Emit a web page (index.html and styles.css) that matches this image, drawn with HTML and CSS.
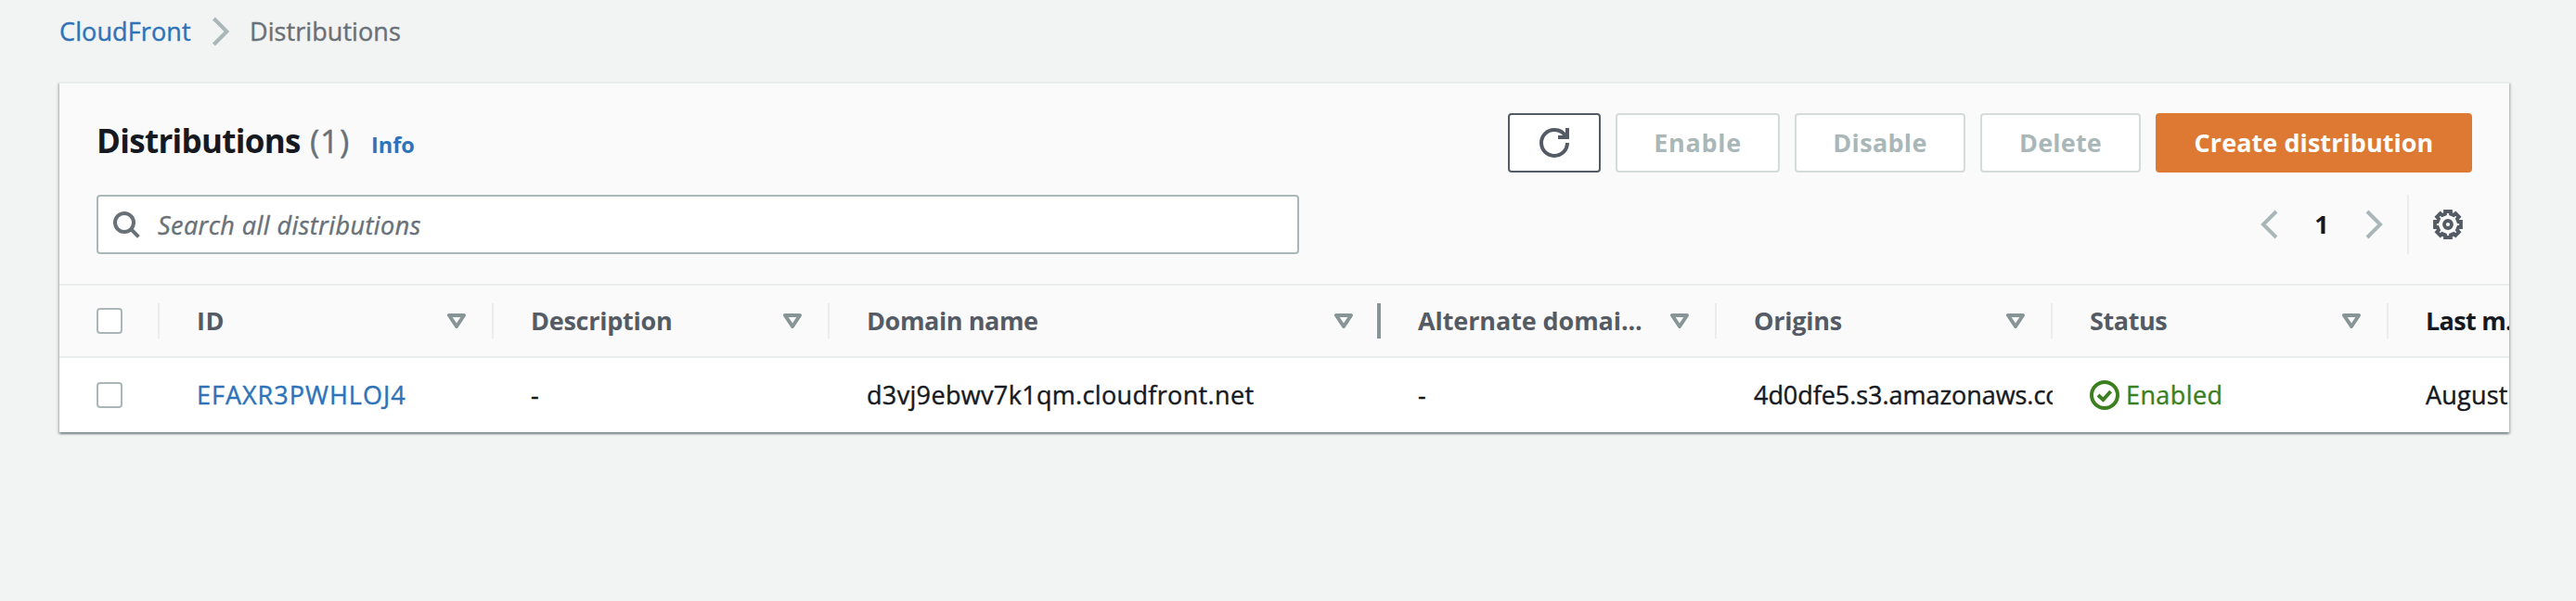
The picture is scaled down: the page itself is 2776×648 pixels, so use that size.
FILE: index.html
```html
<!DOCTYPE html>
<html lang="en">
<head>
<meta charset="utf-8">
<title>CloudFront Distributions</title>
<link rel="stylesheet" href="styles.css">
</head>
<body>
<nav class="breadcrumb">
  <a class="crumb-link" href="#">CloudFront</a>
  <svg class="crumb-sep" width="32" height="32" viewBox="0 0 16 16"><path d="M4.200 1l7 7-7 7"/></svg>
  <span class="crumb-current">Distributions</span>
</nav>
<main class="card">
  <header class="card-head">
    <div class="title-row">
      <h1 class="title">Distributions</h1><span class="count">(1)</span><a class="info" href="#">Info</a>
      <div class="actions">
        <button class="btn btn-refresh" aria-label="Refresh"><svg width="32" height="32" viewBox="0 0 16 16"><path d="M15 8c0 3.900-3.100 7-7 7s-7-3.100-7-7 3.100-7 7-7c2.800 0 5.200 1.500 6.300 4"/><path d="M10 5h5V0"/></svg></button>
        <button class="btn btn-enable" disabled>Enable</button>
        <button class="btn btn-disable" disabled>Disable</button>
        <button class="btn btn-delete" disabled>Delete</button>
        <button class="btn btn-create">Create distribution</button>
      </div>
    </div>
    <div class="tools-row">
      <div class="search">
        <svg width="32" height="32" viewBox="0 0 16 16"><circle cx="7" cy="7" r="5"/><path d="M10.600 10.600l4.100 4.100"/></svg>
        <span class="search-text">Search all distributions</span>
      </div>
      <div class="pager">
        <svg class="chev" width="32" height="32" viewBox="0 0 16 16"><path d="M11.500 1l-7 7 7 7"/></svg>
        <span class="page">1</span>
        <svg class="chev" width="32" height="32" viewBox="0 0 16 16"><path d="M4.500 1l7 7-7 7"/></svg>
      </div>
      <svg class="gear" width="32" height="32" viewBox="0 0 32 32"><path d="M13 2h6v2.700l3.200 1.300 2.100-1.800 3.600 3.600-1.900 2.100 1.300 3.100H30v6h-2.700l-1.300 3.100 1.900 2.100-3.600 3.600-2.100-1.800-3.200 1.300V30h-6v-2.700l-3.200-1.300-2.100 1.800-3.600-3.600 1.900-2.100L4.700 19H2v-6h2.700l1.300-3.100-1.900-2.100 3.600-3.600L9.800 6 13 4.700z"/><circle cx="16" cy="16" r="4"/></svg>
    </div>
  </header>
  <div class="row row-head">
    <div class="cell"><span class="check"></span></div>
    <div class="cell"><span class="label l-id">ID</span><svg class="sort" viewBox="0 0 20 16"><path d="M2 2h16l-8 12z"/></svg></div>
    <div class="cell"><span class="label l-desc">Description</span><svg class="sort" viewBox="0 0 20 16"><path d="M2 2h16l-8 12z"/></svg></div>
    <div class="cell cell-active"><span class="label l-domain">Domain name</span><svg class="sort" viewBox="0 0 20 16"><path d="M2 2h16l-8 12z"/></svg></div>
    <div class="cell"><span class="label l-alt">Alternate domai...</span><svg class="sort" viewBox="0 0 20 16"><path d="M2 2h16l-8 12z"/></svg></div>
    <div class="cell"><span class="label l-desc">Origins</span><svg class="sort" viewBox="0 0 20 16"><path d="M2 2h16l-8 12z"/></svg></div>
    <div class="cell"><span class="label l-domain">Status</span><svg class="sort" viewBox="0 0 20 16"><path d="M2 2h16l-8 12z"/></svg></div>
    <div class="cell cell-last"><span class="label l-last">Last m...</span></div>
  </div>
  <div class="row row-body">
    <div class="cell"><span class="check"></span></div>
    <div class="cell"><a class="dist-id" href="#">EFAXR3PWHLOJ4</a></div>
    <div class="cell"><span class="dash">-</span></div>
    <div class="cell"><span class="host">d3vj9ebwv7k1qm.cloudfront.net</span></div>
    <div class="cell"><span class="dash">-</span></div>
    <div class="cell"><span class="origin">4d0dfe5.s3.amazonaws.com</span></div>
    <div class="cell status"><svg width="32" height="32" viewBox="0 0 16 16"><circle cx="8" cy="8" r="7"/><path d="M4.500 8l2.700 2.500 4.100-4.500"/></svg><span class="state">Enabled</span></div>
    <div class="cell"><span class="date">August</span></div>
  </div>
</main>
</body>
</html>
```
FILE: styles.css
```css
* { box-sizing: border-box; }
body {
  margin: 0;
  height: 648px;
  overflow: hidden;
  background: #f2f3f3;
  color: #16191f;
  font: 400 27px/36px "Open Sans", "Noto Sans", sans-serif;
}
a { color: #2e73b8; text-decoration: none; }
svg { display: block; flex: none; fill: none; stroke: currentColor; stroke-width: 2; }

.breadcrumb { display: flex; align-items: center; height: 88px; padding: 0 0 20px 64px; }
.crumb-link { width: 158px; letter-spacing: .12px; }
.crumb-sep { color: #aab7b8; }
.crumb-current { margin-left: 15px; color: #687078; letter-spacing: .07px; }
.crumb-link, .crumb-current, .count, .search-text, .row-body { -webkit-text-stroke: .4px currentColor; }

.card {
  width: 2640px;
  margin-left: 64px;
  border-top: 2px solid #eaeded;
  background: #fff;
  box-shadow: 0 2px 2px 0 rgba(0,28,36,.3), 2px 2px 2px 0 rgba(0,28,36,.15), -2px 2px 2px 0 rgba(0,28,36,.15);
}
.card-head {
  height: 218px;
  padding: 32px 40px 0;
  background: #fafafa;
  border-bottom: 2px solid #eaeded;
}
.title-row { display: flex; align-items: baseline; height: 64px; }
.title { margin: 0; width: 229px; font-size: 35px; line-height: 59px; letter-spacing: -.7px; white-space: nowrap; }
.count { width: 67px; padding-left: 1px; color: #687078; font-size: 35px; letter-spacing: .8px; }
.info { font-size: 23.500px; font-weight: 700; }
.actions { display: flex; gap: 16px; margin-left: auto; align-self: flex-start; }
.btn {
  display: flex; align-items: center; justify-content: center;
  height: 64px; padding: 0;
  border: 2px solid #d5dbdb; border-radius: 4px;
  background: #fff; color: #aab7b8;
  font: 700 27px/36px "Open Sans", "Noto Sans", sans-serif;
  white-space: nowrap;
}
.btn-refresh { width: 100px; border-color: #545b64; color: #545b64; }
.btn-enable { width: 177px; letter-spacing: .7px; }
.btn-disable { width: 184px; letter-spacing: .3px; }
.btn-delete { width: 173px; letter-spacing: .2px; }
.btn-create { width: 341px; border-color: #dd7932; background: #dd7932; color: #fff; letter-spacing: .06px; }

.tools-row { display: flex; align-items: center; height: 64px; margin-top: 24px; }
.search {
  display: flex; align-items: center;
  width: 1296px; height: 64px; padding-left: 14px;
  border: 2px solid #aab7b8; border-radius: 4px;
  background: #fff; color: #687078;
}
.search-text { margin: 2px 0 0 18px; font-style: italic; letter-spacing: .43px; }
.pager {
  display: flex; align-items: center; justify-content: space-between;
  width: 166px; height: 64px; margin-left: auto; padding-right: 20px;
  border-right: 2px solid #eaeded;
}
.chev { color: #aab7b8; }
.page { font-weight: 700; }
.gear { margin: 0 10px 0 26px; color: #545b64; stroke-width: 3.800; }

.row {
  display: grid;
  grid-template-columns: 108px 360px 362px 594px 362px 362px 362px 130px;
  overflow: hidden;
}
.cell { display: flex; align-items: center; min-width: 0; padding-left: 40px; white-space: nowrap; overflow: hidden; }
.row-head { height: 78px; background: #fafafa; border-bottom: 2px solid #eaeded; color: #545b64; font-weight: 700; }
.row-head .cell { height: 38px; margin-top: 19px; border-right: 2px solid #eaeded; }
.row-head .cell-active { border-right: 4px solid #879596; }
.row-head .cell-last { border: 0; color: #16191f; }
.sort { width: 20px; height: 16px; margin: 0 28px 0 auto; color: #879596; stroke-width: 4; stroke-linejoin: round; }
.cell-active .sort { margin-right: 26px; }
.row-body { height: 80px; }
.check { width: 28px; height: 28px; border: 2px solid #aab7b8; border-radius: 4px; background: #fff; }
.l-id { letter-spacing: .6px; }
.l-desc { letter-spacing: -.25px; }
.l-domain { letter-spacing: -.4px; }
.l-alt { letter-spacing: -.1px; }
.l-last { letter-spacing: -.7px; }
.dist-id { letter-spacing: 1px; }
.host { letter-spacing: .34px; }
.origin { letter-spacing: -.05px; }
.date { letter-spacing: .2px; }
.status { color: #3b7f1f; }
.state { margin-left: 7px; letter-spacing: .4px; }
```
